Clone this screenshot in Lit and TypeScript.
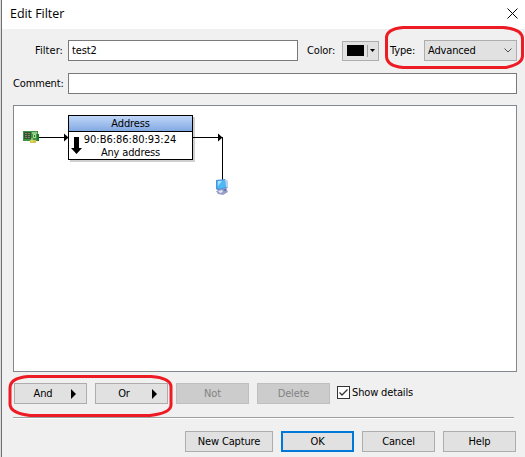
import { LitElement, html, css, svg } from "lit";
import { customElement, property } from "lit/decorators.js";

@customElement("push-button")
class PushButton extends LitElement {
  @property() label = "";
  @property({ type: Boolean, reflect: true }) disabled = false;
  @property({ type: Boolean, reflect: true }) primary = false;
  @property({ type: Boolean, reflect: true }) menu = false;
  static styles = css`
    :host { display: block; width: 73px; height: 21px; }
    :host([wide]) { width: 88px; }
    button {
      width: 100%; height: 100%; box-sizing: border-box; padding: 0; margin: 0;
      display: flex; align-items: center; justify-content: center;
      border: 1px solid #adadad; border-radius: 0; background: #e1e1e1; color: #000;
      font: inherit; letter-spacing: inherit; line-height: 13px;
    }
    :host([primary]) button { border: 2px solid #0078d7; }
    :host([disabled]) button { background: #ccc; border-color: #bfbfbf; color: #838383; }
    .menu { justify-content: flex-end; padding-right: 10px; }
    .menu span { width: 20px; text-align: center; margin-right: 18px; }
    svg { display: block; }
  `;
  render() {
    return html`<button class=${this.menu ? "menu" : ""} ?disabled=${this.disabled}>
      <span>${this.label}</span>${this.menu
        ? html`<svg width="5" height="10" viewBox="0 0 5 10"><path d="M0 0L5 5L0 10Z" /></svg>`
        : ""}
    </button>`;
  }
}

@customElement("flow-canvas")
class FlowCanvas extends LitElement {
  static styles = css`
    :host { display: block; position: relative; box-sizing: border-box; width: 504px; height: 267px; border: 1px solid #828790; background: #fff; }
    .wires { position: absolute; left: 0; top: 0; z-index: 1; }
    .node {
      position: absolute; left: 54px; top: 9px; width: 125px; height: 45px; box-sizing: border-box;
      border: 1px solid #000; background: #fff; box-shadow: 2px 2px 0 #d0d0d0; text-align: center;
    }
    .head { height: 15px; line-height: 16px; border-bottom: 1px solid #000; background: linear-gradient(#c0d7f8, #82a9e3); }
    .body { line-height: 13px; padding-top: 1px; }
    .mac { letter-spacing: -0.02px; margin-left: -1px; }
    .down { position: absolute; left: 2px; top: 21px; }
  `;
  render() {
    return html`
      <svg class="wires" width="260" height="110" viewBox="14 106 260 110">
        <g stroke="#000" fill="none" shape-rendering="crispEdges">
          <path d="M38 137.5H64M193 137.5H222.5V180" />
        </g>
        <path d="M64 133.5L68.5 137.5L64 141.5ZM218 133.5L222.5 137.5L218 141.5Z" />
        ${svg`
          <g>
            <path d="M23 131H38V141H23Z" fill="#3f9545" />
            <path d="M24 132H31V139H24Z" fill="#2a5a30" />
            <path d="M25 133.500H27M28 133.500H30M25 135.500H27M28 135.500H30M25 137.500H27M28 137.500H30" stroke="#94766a" />
            <path d="M32 132H37V134H32Z" fill="#8fca84" />
            <path d="M33 134H36V138H33Z" fill="#a9d890" />
            <path d="M34 135H35V137H34Z" fill="#2c7a34" />
            <path d="M37 134H39V141H37Z" fill="#1d7a28" />
            <path d="M30 140H36V143H30Z" fill="#d0c24c" />
            <path d="M32 138V142" stroke="#f1e68a" />
          </g>
          <g>
            <path d="M216 180L225 179L228 188L219 191L216 189Z" fill="#5590d8" />
            <path d="M217 181L225 180L226 187L219 189L217 187Z" fill="#4cb9f5" />
            <path d="M218 181L222 181L218 186Z" fill="#a5e4ff" />
            <path d="M225 179L228 181L228 188L226 187Z" fill="#b9d0ee" />
            <path d="M219 190L226 188L228 192L223 195L218 194L216 191Z" fill="#989fc6" />
            <path d="M218 191L222 190L223 192L220 193Z" fill="#dfe4f4" />
            <path d="M223 190L226 189V191Z" fill="#565f9c" />
          </g>`}
      </svg>
      <div class="node">
        <div class="head">Address</div>
        <div class="body"><div class="mac">90:B6:86:80:93:24</div><div>Any address</div></div>
        <svg class="down" width="11" height="17" viewBox="0 0 11 17"><path d="M3 0H8V11H11L5.5 17L0 11H3Z" /></svg>
      </div>`;
  }
}

@customElement("app-root")
class AppRoot extends LitElement {
  static styles = css`
    :host {
      display: block; position: relative; width: 525px; height: 457px; box-sizing: border-box; overflow: hidden;
      background: #f0f0f0; border-left: 1px solid #dcdcdc; color: #000;
      font: 11px "DejaVu Sans Condensed", "DejaVu Sans", sans-serif; font-stretch: condensed; letter-spacing: -0.15px;
    }
    .window { height: 457px; box-sizing: border-box; border-left: 1px solid #707070; }
    header { height: 29px; background: #fff; display: flex; justify-content: space-between; padding: 0 7px 0 8px; font: 12.5px/27px "Open Sans", sans-serif; letter-spacing: -0.05px; }
    header svg { margin-top: 8px; }
    .row { display: flex; align-items: center; height: 21px; padding-left: 11px; width: 504px; }
    .first { margin-top: 11px; }
    .second { margin-top: 12px; }
    .label { width: 50px; text-align: right; margin-right: 5px; white-space: nowrap; }
    .first .label { letter-spacing: 0.05px; }
    .field { box-sizing: border-box; height: 21px; border: 1px solid #7a7a7a; background: #fff; line-height: 19px; padding-left: 3px; }
    .short { width: 230px; }
    .long { width: 449px; }
    .color { width: 34px; margin-left: 9px; }
    .picker { box-sizing: border-box; width: 37px; height: 20px; margin-left: 1px; border: 1px solid #adadad; background: #e1e1e1; display: flex; align-items: center; padding-left: 4px; }
    .swatch { width: 17px; height: 11px; background: #000; margin-right: 3px; }
    .sep { width: 1px; height: 12px; background: #a0a0a0; margin-right: 2px; }
    .type { margin-left: 11px; width: 34px; }
    .select { box-sizing: border-box; width: 93px; height: 21px; border: 1px solid #adadad; background: #e1e1e1; display: flex; align-items: center; justify-content: space-between; padding: 0 4px 0 3px; }
    flow-canvas { margin: 11px 0 0 11px; }
    .actions { display: flex; gap: 8px; margin: 11px 0 0 12px; }
    .check { display: flex; align-items: flex-start; padding-top: 3px; margin-left: -1px; gap: 2px; line-height: 14px; }
    .rule { width: 501px; height: 1px; background: #a0a0a0; border-bottom: 1px solid #fff; margin: 13px 0 12px 11px; }
    footer { display: flex; justify-content: flex-end; gap: 8px; padding-right: 9px; }
    .marks { position: absolute; left: -1px; top: 0; pointer-events: none; }
  `;
  render() {
    return html`
      <div class="window">
        <header><span>Edit Filter</span>
          <svg width="11" height="11" viewBox="0 0 11 11"><path d="M.5 .5L10.5 10.5M10.5 .5L.5 10.5" stroke="#000" /></svg>
        </header>
        <div class="row first">
          <span class="label">Filter:</span><div class="field short">test2</div>
          <span class="color">Color:</span>
          <div class="picker"><span class="swatch"></span><span class="sep"></span>
            <svg width="5" height="3" viewBox="0 0 5 3"><path d="M0 0H5L2.5 3Z" /></svg></div>
          <span class="type">Type:</span>
          <div class="select"><span>Advanced</span>
            <svg width="8" height="5" viewBox="0 0 8 5"><path d="M.5 .5L4 4L7.5 .5" fill="none" stroke="#505050" /></svg></div>
        </div>
        <div class="row second"><span class="label">Comment:</span><div class="field long"></div></div>
        <flow-canvas></flow-canvas>
        <div class="actions">
          <push-button label="And" menu></push-button>
          <push-button label="Or" menu></push-button>
          <push-button label="Not" disabled></push-button>
          <push-button label="Delete" disabled></push-button>
          <div class="check">
            <svg width="13" height="13" viewBox="0 0 13 13"><rect x=".5" y=".5" width="12" height="12" fill="#fff" stroke="#333" /><path d="M2.5 6.5L5 9L10.5 3.5" fill="none" stroke="#333" stroke-width="1.3" /></svg>
            <span>Show details</span>
          </div>
        </div>
        <div class="rule"></div>
        <footer>
          <push-button wide label="New Capture"></push-button>
          <push-button primary label="OK"></push-button>
          <push-button label="Cancel"></push-button>
          <push-button label="Help"></push-button>
        </footer>
      </div>
      <svg class="marks" width="525" height="457" viewBox="0 0 525 457" fill="none" stroke="#ed1c24" stroke-width="3">
        <path d="M403 27.500H503Q522.500 29 522.500 39V56Q522.500 64 506 67.500H403Q386.500 66 386.500 56V38Q386.500 29 403 27.500Z" />
        <path d="M28 376.500H151Q171 378 171 387V405Q171 413 150 415.500H30Q10 413 10 404V388Q10 378 28 376.500Z" />
      </svg>`;
  }
}
